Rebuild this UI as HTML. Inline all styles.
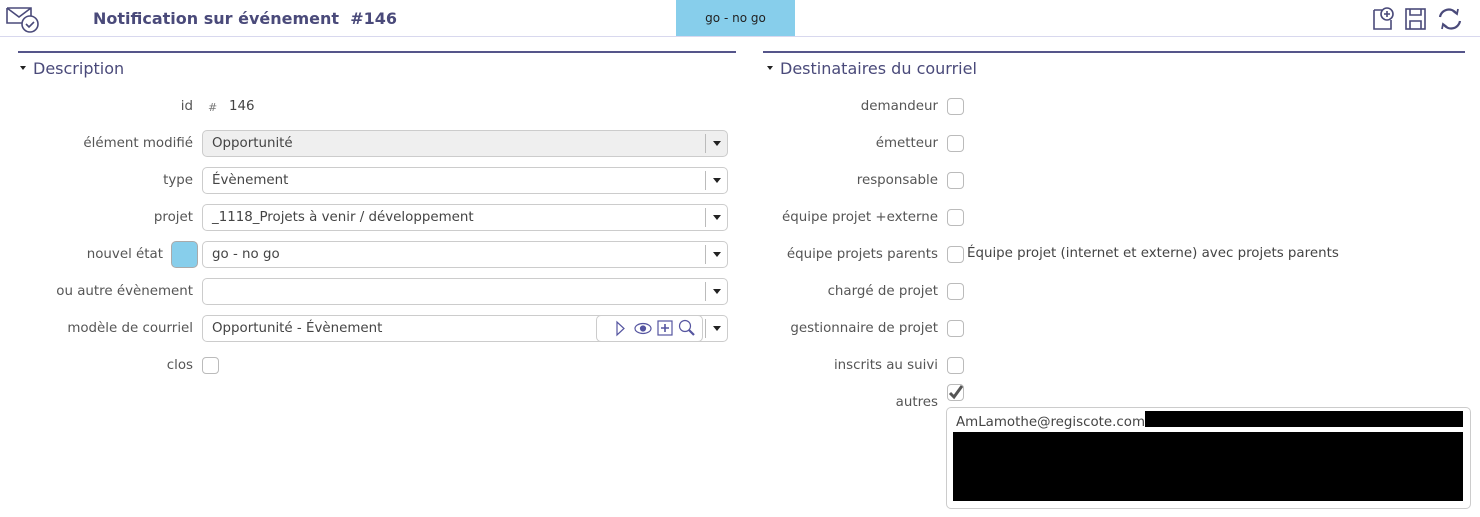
<!DOCTYPE html>
<html><head><meta charset="utf-8"><style>
*{box-sizing:border-box;margin:0;padding:0}
body{width:1480px;height:517px;background:#fff;font-family:"DejaVu Sans","Liberation Sans",sans-serif;font-size:13.4px;color:#444;position:relative;overflow:hidden}
.abs{position:absolute}
.hdr{left:0;top:0;width:1480px;height:37px;border-bottom:1px solid #d8d8ee}
.title{left:93px;top:9px;font-size:16px;font-weight:bold;color:#4a4a7a;font-family:"DejaVu Sans",sans-serif}
.tab{left:676px;top:0;width:119px;height:36px;background:#87ceeb;color:#222;font-size:12px;text-align:center;line-height:36px}
.sec{height:2px;background:#55558a}
.sect{font-size:16px;color:#4a4a7a}
.lbl{width:190px;text-align:right;color:#555}
.rlbl{width:200px;text-align:right;color:#555}
.fld{left:202px;width:526px;height:27px;border:1px solid #ccc;border-radius:5px;background:#fff;padding-left:9px;line-height:25px;color:#444}
.fld .dd{position:absolute;right:0;top:3px;width:22px;height:19px;border-left:1px solid #bbb}
.fld .dd:after{content:"";position:absolute;left:7px;top:7px;border-left:4px solid transparent;border-right:4px solid transparent;border-top:5px solid #222}
.cb{width:17px;height:17px;border:1px solid #bbb;border-radius:4px;background:#fff}
.tri{display:inline-block;border-left:3.5px solid transparent;border-right:3.5px solid transparent;border-top:4px solid #222;vertical-align:middle;margin-right:7px;margin-top:-3px}
</style></head><body>
<div class="abs hdr"></div>
<svg class="abs" style="left:6px;top:6px" width="34" height="28" viewBox="0 0 34 28" fill="none" stroke="#4a4a7a" stroke-width="1.6">
<path d="M1 2h24v9M1 2v15h17M1 2l12 9 12-9"/><circle cx="24" cy="18" r="8" fill="#fff"/><path d="M20 18l3 3 5-5"/></svg>
<div class="abs title">Notification sur événement&nbsp; #146</div>
<div class="abs tab">go - no go</div>
<svg class="abs" style="left:1372px;top:6px" width="92" height="26" viewBox="0 0 92 26" fill="none" stroke="#4a4a7a" stroke-width="1.6">
<path d="M2 4h8M2 4v19h17v-9"/><circle cx="15" cy="8" r="6"/><path d="M15 5v6M12 8h6"/>
<rect x="34" y="3" width="19" height="20"/><path d="M38 3v6h11V3M38 23v-8h11v8"/>
<path d="M68 11a9 9 0 0 1 16 -4M88 15a9 9 0 0 1 -16 4" stroke-width="2.2"/><path d="M81 5l4 3 1-5M75 21l-4-3-1 5" stroke-width="1.8"/></svg>

<div class="abs sec" style="left:18px;top:51px;width:718px"></div>
<div class="abs sect" style="left:20px;top:59px"><span class="tri"></span>Description</div>
<div class="abs sec" style="left:763px;top:51px;width:702px"></div>
<div class="abs sect" style="left:767px;top:59px"><span class="tri"></span>Destinataires du courriel</div>

<div class="abs lbl" style="left:3px;top:99px">id</div>
<div class="abs" style="left:208px;top:101px;font-size:11px;color:#777">#</div>
<div class="abs" style="left:229px;top:99px">146</div>

<div class="abs lbl" style="left:3px;top:136px">élément modifié</div>
<div class="abs fld" style="top:130px;background:#efefef">Opportunité<div class="dd"></div></div>
<div class="abs lbl" style="left:3px;top:173px">type</div>
<div class="abs fld" style="top:167px">Évènement<div class="dd"></div></div>
<div class="abs lbl" style="left:3px;top:210px">projet</div>
<div class="abs fld" style="top:204px">_1118_Projets à venir / développement<div class="dd"></div></div>
<div class="abs lbl" style="left:-27px;top:247px">nouvel état</div>
<div class="abs" style="left:171px;top:241px;width:27px;height:27px;background:#87ceeb;border:1px solid #aaa;border-radius:5px"></div>
<div class="abs fld" style="top:241px">go - no go<div class="dd"></div></div>
<div class="abs lbl" style="left:3px;top:284px">ou autre évènement</div>
<div class="abs fld" style="top:278px"><div class="dd"></div></div>
<div class="abs lbl" style="left:3px;top:321px">modèle de courriel</div>
<div class="abs fld" style="top:315px">Opportunité - Évènement<div class="dd"></div></div>
<div class="abs" style="left:596px;top:315px;width:107px;height:27px;border:1px solid #ccc;border-radius:5px;background:#fff"></div>
<svg class="abs" style="left:612px;top:318px" width="90" height="22" viewBox="0 0 90 22" fill="none" stroke="#5555a0" stroke-width="1.2">
<path d="M5 4v13l7-6.5z"/><ellipse cx="31" cy="10.5" rx="8" ry="5"/><circle cx="31" cy="10.5" r="2.5" fill="#5555a0"/>
<rect x="46" y="3" width="14" height="14"/><path d="M53 6v8M49 10h8" stroke-width="1.6"/>
<circle cx="73" cy="8" r="5.5"/><path d="M77 12l5 5" stroke-width="2.2"/></svg>
<div class="abs lbl" style="left:3px;top:358px">clos</div>
<div class="abs cb" style="left:202px;top:357px"></div>

<div class="abs rlbl" style="left:738px;top:99px">demandeur</div><div class="abs cb" style="left:947px;top:98px"></div>
<div class="abs rlbl" style="left:738px;top:136px">émetteur</div><div class="abs cb" style="left:947px;top:135px"></div>
<div class="abs rlbl" style="left:738px;top:173px">responsable</div><div class="abs cb" style="left:947px;top:172px"></div>
<div class="abs rlbl" style="left:738px;top:210px">équipe projet +externe</div><div class="abs cb" style="left:947px;top:209px"></div>
<div class="abs rlbl" style="left:738px;top:247px">équipe projets parents</div><div class="abs cb" style="left:947px;top:246px"></div>
<div class="abs" style="left:967px;top:246px">Équipe projet (internet et externe) avec projets parents</div>
<div class="abs rlbl" style="left:738px;top:284px">chargé de projet</div><div class="abs cb" style="left:947px;top:283px"></div>
<div class="abs rlbl" style="left:738px;top:321px">gestionnaire de projet</div><div class="abs cb" style="left:947px;top:320px"></div>
<div class="abs rlbl" style="left:738px;top:358px">inscrits au suivi</div><div class="abs cb" style="left:947px;top:357px"></div>
<div class="abs rlbl" style="left:738px;top:395px">autres</div>
<div class="abs cb" style="left:947px;top:384px"></div>
<svg class="abs" style="left:947px;top:384px" width="17" height="17" viewBox="0 0 17 17"><path d="M3 9l4 4 8-11" fill="none" stroke="#555" stroke-width="3"/></svg>
<div class="abs" style="left:946px;top:407px;width:525px;height:102px;border:1px solid #ccc;border-radius:5px"></div>
<div class="abs" style="left:956px;top:415px">AmLamothe@regiscote.com</div>
<div class="abs" style="left:1145px;top:411px;width:318px;height:16px;background:#000"></div>
<div class="abs" style="left:953px;top:432px;width:510px;height:69px;background:#000"></div>
</body></html>
